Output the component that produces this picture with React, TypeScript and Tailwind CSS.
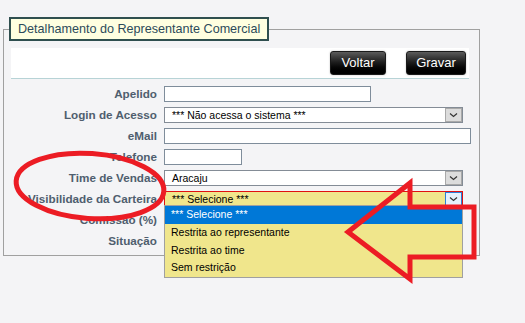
import React from 'react'

const font = "font-['Liberation_Sans',Arial,sans-serif]"

const Chevron = () => (
  <svg width="9" height="6" viewBox="0 0 9 6">
    <path d="M1 1.5 L4.5 4.5 L8 1.5" fill="none" stroke="#333" strokeWidth="1.2" />
  </svg>
)

interface SelectProps {
  value: string
  highlight?: boolean
  children?: React.ReactNode
}

const SelectBox: React.FC<SelectProps> = ({ value, highlight = false, children }) => {
  return (
    <div className="relative">
      <div
        className={`flex h-[16px] w-[299px] border ${
          highlight ? 'border-[#e01010] bg-[#f0e68c]' : 'border-[#848c96] bg-white'
        }`}
      >
        <span className="flex-1 pl-[7px] text-[10.5px] leading-[14px] text-black">{value}</span>
        <span
          className={`flex h-[14px] w-[17px] items-center justify-center border ${
            highlight ? 'border-[#2b80d8] bg-[#e5f1fb]' : 'border-[#a9a9a9] bg-[#dcdcdc]'
          }`}
        >
          <Chevron />
        </span>
      </div>
      {children}
    </div>
  )
}

const Row: React.FC<{ label: string; children?: React.ReactNode }> = ({ label, children }) => (
  <div className="flex h-[16px] items-center">
    <div className="w-[147px] whitespace-nowrap pr-[1px] text-right text-[11.7px] font-bold text-[#4f5e6e]">
      {label}
    </div>
    <div className="ml-[6px]">{children}</div>
  </div>
)

const TextBox: React.FC<{ width: string }> = ({ width }) => (
  <div className={`h-[16px] border border-[#7f8d9b] bg-white ${width}`} />
)

const options = ['*** Selecione ***', 'Restrita ao representante', 'Restrita ao time', 'Sem restrição']

const btn =
  'h-[24px] rounded-[3px] border border-[#1a1a1a] bg-gradient-to-b from-[#5c5c5c] via-[#1a1a1a] to-[#000] text-[13px] text-white shadow-[0_0_2px_#bbb]'

export default function App() {
  return (
    <div className={`relative h-[323px] w-[525px] overflow-hidden bg-[#f4f4f6] pl-[3px] pt-[17px] ${font}`}>
      <fieldset className="w-[475px] border border-[#a0a0a0] pb-[6px] pl-[7px] pr-[8px] pt-[7px]">
        <legend className="-ml-[2px] h-[24px] border-2 border-[#2f4f4f] bg-[#ffffe0] px-[7px] text-[12.6px] leading-[20px] text-[#2c4a5a]">
          Detalhamento do Representante Comercial
        </legend>

        <div className="flex h-[31px] w-[458px] justify-end gap-[20px] border-b border-[#b7d3d6] bg-white pr-[3px] pt-[3px]">
          <button className={`${btn} w-[56px]`}>Voltar</button>
          <button className={`${btn} w-[60px]`}>Gravar</button>
        </div>

        <div className="mt-[7px] flex flex-col gap-[5px]">
          <Row label="Apelido">
            <TextBox width="w-[207px]" />
          </Row>
          <Row label="Login de Acesso">
            <SelectBox value="*** Não acessa o sistema ***" />
          </Row>
          <Row label="eMail">
            <TextBox width="w-[307px]" />
          </Row>
          <Row label="Telefone">
            <TextBox width="w-[78px]" />
          </Row>
          <Row label="Time de Vendas">
            <SelectBox value="Aracaju" />
          </Row>
          <Row label="Visibilidade da Carteira">
            <SelectBox value="*** Selecione ***" highlight>
              <div className="absolute left-0 top-[14px] z-10 w-[299px] border border-[#a0a0a0] bg-[#f0e68c]">
                {options.map((opt, i) => (
                  <div
                    key={opt}
                    className={`flex h-[17.75px] items-center pl-[6px] text-[10.5px] ${
                      i === 0 ? 'bg-[#0078d7] text-white' : 'text-black'
                    }`}
                  >
                    {opt}
                  </div>
                ))}
              </div>
            </SelectBox>
          </Row>
          <Row label="Comissão (%)">
            <TextBox width="w-[60px]" />
          </Row>
          <Row label="Situação">
            <TextBox width="w-[120px]" />
          </Row>
        </div>
      </fieldset>

      {/* red annotation drawn on top of the screenshot */}
      <svg className="pointer-events-none absolute left-0 top-0 z-20" width="525" height="323">
        <ellipse
          cx="90"
          cy="186"
          rx="74"
          ry="32.5"
          transform="rotate(4 90 186)"
          fill="none"
          stroke="#ec1c24"
          strokeWidth="5"
        />
        <polygon
          points="348,232 410,183 410,207 474,207 474,257 410,257 410,279"
          fill="none"
          stroke="#ec1c24"
          strokeWidth="5"
        />
      </svg>
    </div>
  )
}
